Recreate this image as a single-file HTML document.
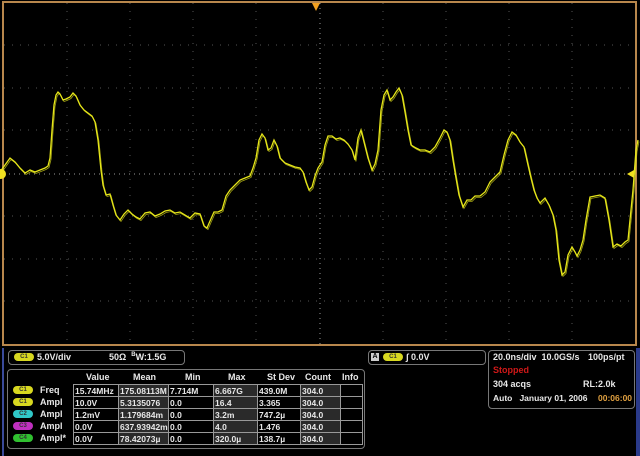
<!DOCTYPE html>
<html><head><meta charset="utf-8"><style>
body{margin:0;width:640px;height:456px;background:#000;overflow:hidden;font-family:"Liberation Sans",sans-serif;position:relative;color:#e8e8e8}
.box{position:absolute;border:1px solid #777;border-radius:4px;box-sizing:border-box}
.t{position:absolute;font-size:9px;font-weight:bold;white-space:nowrap}
.pill{position:absolute;width:20px;height:8px;border-radius:5px;font-size:6px;text-align:center;line-height:8px;color:#333;font-weight:bold}
table{position:absolute;left:73px;top:384px;border-collapse:collapse;font-size:8.5px;font-weight:bold;table-layout:fixed;width:289px}
td{border:1px solid #999;height:12px;padding:0 1px;box-sizing:border-box;white-space:nowrap;overflow:hidden}
td.g{background:#2a2a2a}
</style></head><body>
<svg width="640" height="346" style="position:absolute;left:0;top:0">
<rect x="3" y="2" width="633" height="343" fill="none" stroke="#b8874c" stroke-width="2"/>
<g stroke="#555" stroke-width="1" stroke-dasharray="1,7">
<line x1="67" y1="3" x2="67" y2="344"/><line x1="130" y1="3" x2="130" y2="344"/><line x1="193" y1="3" x2="193" y2="344"/><line x1="256" y1="3" x2="256" y2="344"/><line x1="383" y1="3" x2="383" y2="344"/><line x1="446" y1="3" x2="446" y2="344"/><line x1="509" y1="3" x2="509" y2="344"/><line x1="572" y1="3" x2="572" y2="344"/>
<line x1="4" y1="45" x2="636" y2="45"/><line x1="4" y1="88" x2="636" y2="88"/><line x1="4" y1="130" x2="636" y2="130"/><line x1="4" y1="216" x2="636" y2="216"/><line x1="4" y1="259" x2="636" y2="259"/><line x1="4" y1="301" x2="636" y2="301"/>
</g>
<line x1="320" y1="3" x2="320" y2="344" stroke="#999" stroke-dasharray="1,4"/>
<line x1="4" y1="174" x2="636" y2="174" stroke="#999" stroke-dasharray="1,4"/>
<g fill="none" stroke="#e6e61a" stroke-width="1.3">
<polyline id="w" points="0,172 5,165 10,158 15,162 20,168 25,173 30,170 35,172 40,170 45,168 48,166 50,158 52,130 54,105 56,95 58,92 60,94 63,100 66,99 70,97 73,93 76,96 80,105 84,110 88,113 92,116 95,122 98,140 101,170 103,185 106,195 110,194 113,205 116,215 120,220 124,214 128,210 132,214 136,217 140,219 145,213 150,212 155,216 160,214 165,211 170,210 175,213 180,212 185,215 190,218 195,213 200,214 204,226 207,228 210,221 214,212 218,212 222,210 226,196 230,190 235,185 240,180 245,178 250,176 253,168 256,158 259,140 262,134 265,138 268,150 271,148 274,140 277,146 280,158 285,163 290,165 295,167 300,168 303,172 306,182 309,190 312,187 315,176 318,168 322,162 325,145 328,136 332,136 336,139 340,138 344,140 348,144 352,150 355,160 358,138 361,130 364,142 368,158 372,170 375,164 378,150 381,110 384,95 387,90 390,100 393,97 396,92 399,88 402,95 405,112 408,130 411,145 416,148 420,150 425,150 430,152 435,147 440,138 444,130 447,132 450,140 453,160 456,178 459,195 463,207 467,200 471,200 475,196 480,196 485,192 490,182 495,177 500,172 504,155 508,140 512,132 516,135 520,142 524,147 528,165 531,178 534,190 537,198 540,203 545,198 549,205 553,215 556,230 559,260 562,275 565,272 568,255 572,247 575,252 577,256 580,250 583,240 586,220 590,197 595,196 600,195 605,198 609,220 613,247 617,244 621,246 625,242 628,240 630,220 633,190 636,150 638,140"/>
<use href="#w" transform="translate(1,1.5)" stroke-width="0.8" opacity="0.7"/>
</g>
<polygon points="312,3 320,3 316,11" fill="#f2a020"/>
<polygon points="634,170 634,178 627,174" fill="#f0e020"/>
<circle cx="1" cy="174" r="5" fill="#f0e020"/>
</svg>
<div style="position:absolute;left:2px;top:348px;width:2px;height:108px;background:#3a4a9a"></div>
<div style="position:absolute;left:636px;top:348px;width:4px;height:108px;background:#2a3a8a"></div>
<div class="box" style="left:8px;top:350px;width:177px;height:15px"></div>
<div class="pill" style="left:14px;top:353px;background:#d8d820">C1</div>
<div class="t" style="left:37px;top:352px">5.0V/div</div>
<div class="t" style="left:109px;top:352px">50Ω &nbsp;<sup style="font-size:6px">B</sup>W:1.5G</div>
<div class="box" style="left:7px;top:369px;width:358px;height:80px"></div>
<div class="t" style="left:86px;top:372px">Value</div>
<div class="t" style="left:133px;top:372px">Mean</div>
<div class="t" style="left:185px;top:372px">Min</div>
<div class="t" style="left:228px;top:372px">Max</div>
<div class="t" style="left:267px;top:372px">St Dev</div>
<div class="t" style="left:305px;top:372px">Count</div>
<div class="t" style="left:342px;top:372px">Info</div>
<div class="pill" style="left:13px;top:386px;background:#d8d820">C1</div><div class="t" style="left:40px;top:385px">Freq</div>
<div class="pill" style="left:13px;top:398px;background:#d8d820">C1</div><div class="t" style="left:40px;top:397px">Ampl</div>
<div class="pill" style="left:13px;top:410px;background:#30c8c8">C2</div><div class="t" style="left:40px;top:409px">Ampl</div>
<div class="pill" style="left:13px;top:422px;background:#c030c0">C3</div><div class="t" style="left:40px;top:421px">Ampl</div>
<div class="pill" style="left:13px;top:434px;background:#30c030">C4</div><div class="t" style="left:40px;top:433px">Ampl*</div>
<table>
<colgroup><col style="width:45px"><col style="width:50px"><col style="width:45px"><col style="width:44px"><col style="width:43px"><col style="width:40px"><col style="width:22px"></colgroup>
<tr><td>15.74MHz</td><td class="g">175.08113M</td><td>7.714M</td><td class="g">6.667G</td><td>439.0M</td><td class="g">304.0</td><td></td></tr>
<tr><td>10.0V</td><td class="g">5.3135076</td><td>0.0</td><td class="g">16.4</td><td>3.365</td><td class="g">304.0</td><td></td></tr>
<tr><td>1.2mV</td><td class="g">1.179684m</td><td>0.0</td><td class="g">3.2m</td><td>747.2µ</td><td class="g">304.0</td><td></td></tr>
<tr><td>0.0V</td><td class="g">637.93942m</td><td>0.0</td><td class="g">4.0</td><td>1.476</td><td class="g">304.0</td><td></td></tr>
<tr><td>0.0V</td><td class="g">78.42073µ</td><td>0.0</td><td class="g">320.0µ</td><td>138.7µ</td><td class="g">304.0</td><td></td></tr>
</table>
<div class="box" style="left:368px;top:350px;width:118px;height:15px"></div>
<div style="position:absolute;left:371px;top:353px;width:8px;height:8px;background:#ccc;color:#000;font-size:7px;font-weight:bold;line-height:8px;text-align:center">A</div>
<div class="pill" style="left:383px;top:353px;background:#d8d820">C1</div>
<div class="t" style="left:406px;top:352px">∫ 0.0V</div>
<div class="box" style="left:488px;top:350px;width:147px;height:59px"></div>
<div class="t" style="left:493px;top:352px">20.0ns/div &nbsp;10.0GS/s</div>
<div class="t" style="left:588px;top:352px">100ps/pt</div>
<div class="t" style="left:493px;top:365px;color:#d01818">Stopped</div>
<div class="t" style="left:493px;top:379px">304 acqs</div>
<div class="t" style="left:583px;top:379px">RL:2.0k</div>
<div class="t" style="left:493px;top:393px;font-size:8.5px">Auto &nbsp;&nbsp;January 01, 2006</div>
<div class="t" style="left:598px;top:393px;color:#e0a040;font-size:8.5px">00:06:00</div>
</body></html>
